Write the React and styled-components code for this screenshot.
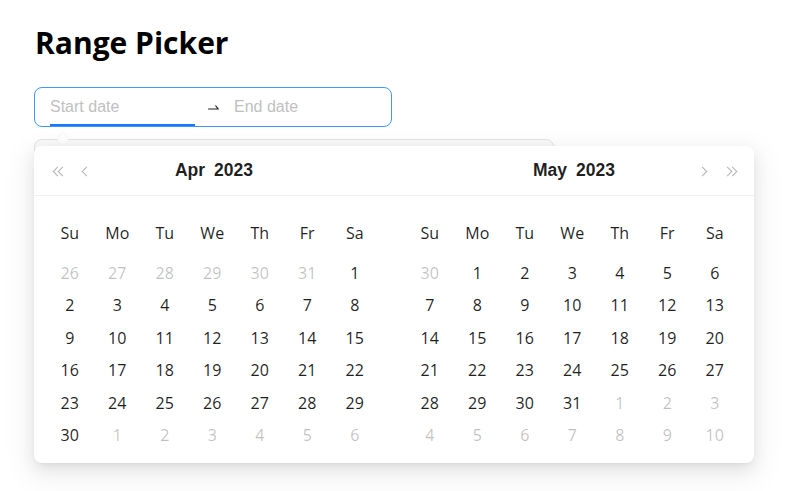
import React from "react";
import styled, { createGlobalStyle } from "styled-components";

const GlobalStyle = createGlobalStyle`
  body {
    margin: 0;
    background: #ffffff;
    font-family: "Open Sans", "Noto Sans", sans-serif;
    color: rgba(0, 0, 0, 0.88);
  }
`;

const Page = styled.div`
  padding: 25px 34px 40px;
`;

const Title = styled.h1`
  margin: 0 0 26px 1px;
  font-size: 30px;
  line-height: 36px;
  font-weight: 700;
  color: #000;
`;

const Field = styled.div`
  position: relative;
  box-sizing: border-box;
  width: 358px;
  height: 40px;
  padding: 0 15px;
  display: flex;
  align-items: center;
  border: 1px solid #4096ff;
  border-radius: 8px;
  background: #fff;
`;

const DateInput = styled.input`
  width: ${p => p.width}px;
  box-sizing: border-box;
  border: 0;
  outline: none;
  padding: 0;
  background: transparent;
  font-family: "Liberation Sans", Arial, sans-serif;
  font-size: 16px;
  color: rgba(0, 0, 0, 0.88);
  &::placeholder {
    color: #bfbfbf;
  }
`;

const Separator = styled.span`
  width: 39px;
  display: flex;
  align-items: center;
  justify-content: center;
  color: rgba(0, 0, 0, 0.88);
  svg {
    width: 15px;
    height: 15px;
    margin-left: -2px;
  }
`;

const ActiveBar = styled.div`
  position: absolute;
  left: 15px;
  bottom: 0;
  width: 145px;
  height: 2px;
  background: #1677ff;
`;

const Dropdown = styled.div`
  position: relative;
  margin-top: 19px;
  width: 720px;
`;

const GhostOutline = styled.div`
  position: absolute;
  top: -7px;
  left: 0;
  width: 520px;
  height: 60px;
  box-sizing: border-box;
  border: 1px solid #e3e3e3;
  border-radius: 8px;
  background: #fafafa;
`;

const PopArrow = styled.div`
  position: absolute;
  top: -11px;
  left: 25px;
  width: 8px;
  height: 8px;
  background: #fff;
  transform: rotate(45deg);
  box-shadow: -1px -1px 2px rgba(0, 0, 0, 0.04);
`;

const Panels = styled.div`
  position: relative;
  display: flex;
  background: #fff;
  border-radius: 8px;
  box-shadow: 0 6px 16px 0 rgba(0, 0, 0, 0.08),
    0 3px 6px -4px rgba(0, 0, 0, 0.12), 0 9px 28px 8px rgba(0, 0, 0, 0.05);
`;

const Panel = styled.div`
  width: 360px;
`;

const Header = styled.div`
  display: grid;
  grid-template-columns: 1fr auto 1fr;
  align-items: center;
  height: 49px;
  padding: 0 12px;
  border-bottom: 1px solid #f0f0f0;
`;

const NavGroup = styled.div`
  display: flex;
  justify-content: ${p => (p.end ? "flex-end" : "flex-start")};
`;

const NavButton = styled.button`
  position: relative;
  width: 26px;
  height: 26px;
  padding: 0;
  border: 0;
  background: transparent;
  cursor: pointer;
`;

const Chevron = styled.span`
  position: absolute;
  top: 50%;
  left: 50%;
  width: 6px;
  height: 6px;
  margin: -3px 0 0 ${p => p.offset}px;
  border-top: 1.5px solid #b3b3b3;
  border-left: 1.5px solid #b3b3b3;
  transform: rotate(${p => (p.dir === "left" ? -45 : 135)}deg);
`;

const MonthTitle = styled.div`
  display: flex;
  gap: 9px;
  font-family: "Liberation Sans", Arial, sans-serif;
  font-size: 17.5px;
  font-weight: 700;
  color: rgba(0, 0, 0, 0.88);
`;

const Body = styled.div`
  padding: 14px 15.5px 11.5px 12px;
`;

const Grid = styled.div`
  display: grid;
  grid-template-columns: repeat(7, 47.5px);
  grid-template-rows: 46.5px repeat(6, 32.5px);
`;

const WeekDay = styled.div`
  display: flex;
  align-items: center;
  justify-content: center;
  font-size: 16px;
  color: rgba(0, 0, 0, 0.88);
`;

const Cell = styled.div`
  display: flex;
  align-items: center;
  justify-content: center;
  font-size: 16px;
  color: ${p => (p.inView ? "rgba(0, 0, 0, 0.88)" : "rgba(0, 0, 0, 0.25)")};
`;

const WEEK = ["Su", "Mo", "Tu", "We", "Th", "Fr", "Sa"];
const MONTHS = ["Jan", "Feb", "Mar", "Apr", "May", "Jun", "Jul", "Aug", "Sep", "Oct", "Nov", "Dec"];

const buildDays = (year, month) => {
  const first = new Date(year, month, 1);
  const start = new Date(year, month, 1 - first.getDay());
  const days = [];
  for (let i = 0; i < 42; i++) {
    const d = new Date(start.getFullYear(), start.getMonth(), start.getDate() + i);
    days.push({ day: d.getDate(), inView: d.getMonth() === month, key: i });
  }
  return days;
};

const SwapRight = () => (
  <svg viewBox="0 0 1024 1024" fill="currentColor">
    <path d="M873.1 596.2l-164-208A32 32 0 00684 376h-64.8c-6.7 0-10.4 7.7-6.3 13l144.3 183H152c-4.4 0-8 3.6-8 8v60c0 4.4 3.6 8 8 8h695.9c26.8 0 41.7-30.8 25.2-51.8z" />
  </svg>
);

const DoubleChevron = ({ dir }) => (
  <>
    <Chevron dir={dir} offset={-5} />
    <Chevron dir={dir} offset={0} />
  </>
);

const MonthPanel = ({ year, month, side }) => (
  <Panel>
    <Header>
      <NavGroup>
        {side === "left" && (
          <>
            <NavButton aria-label="Previous year">
              <DoubleChevron dir="left" />
            </NavButton>
            <NavButton aria-label="Previous month">
              <Chevron dir="left" offset={-2} />
            </NavButton>
          </>
        )}
      </NavGroup>
      <MonthTitle>
        <span>{MONTHS[month]}</span>
        <span>{year}</span>
      </MonthTitle>
      <NavGroup end>
        {side === "right" && (
          <>
            <NavButton aria-label="Next month">
              <Chevron dir="right" offset={-4} />
            </NavButton>
            <NavButton aria-label="Next year">
              <DoubleChevron dir="right" />
            </NavButton>
          </>
        )}
      </NavGroup>
    </Header>
    <Body>
      <Grid>
        {WEEK.map(w => (
          <WeekDay key={w}>{w}</WeekDay>
        ))}
        {buildDays(year, month).map(d => (
          <Cell key={d.key} inView={d.inView}>
            {d.day}
          </Cell>
        ))}
      </Grid>
    </Body>
  </Panel>
);

export default function App() {
  return (
    <>
      <GlobalStyle />
      <Page>
        <Title>Range Picker</Title>
        <Field>
          <DateInput width={145} placeholder="Start date" />
          <Separator>
            <SwapRight />
          </Separator>
          <DateInput width={140} placeholder="End date" />
          <ActiveBar />
        </Field>
        <Dropdown>
          <GhostOutline />
          <PopArrow />
          <Panels>
            <MonthPanel year={2023} month={3} side="left" />
            <MonthPanel year={2023} month={4} side="right" />
          </Panels>
        </Dropdown>
      </Page>
    </>
  );
}
